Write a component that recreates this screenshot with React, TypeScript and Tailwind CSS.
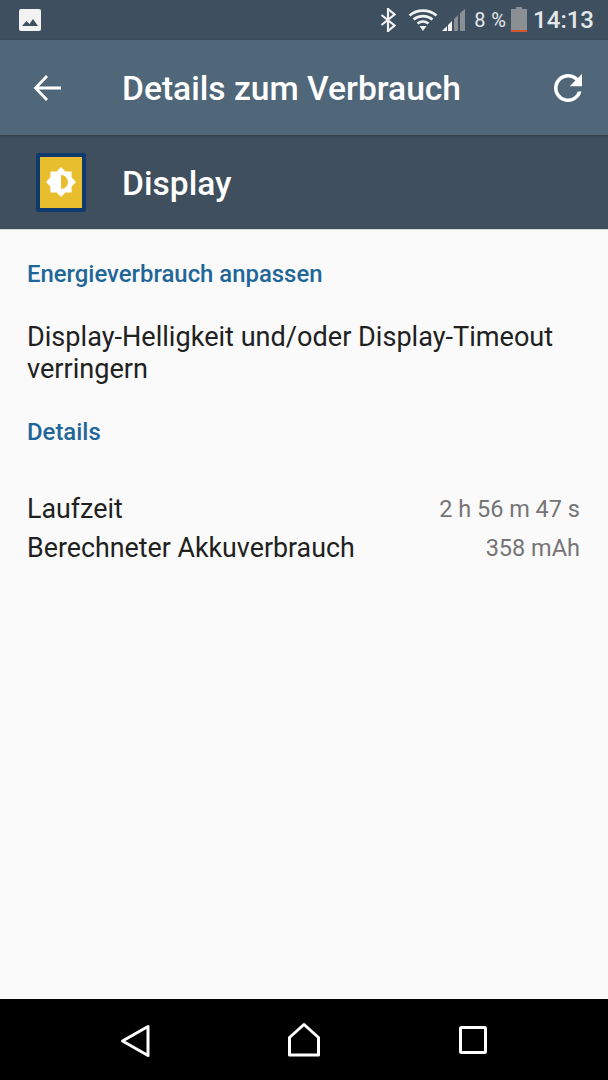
import React from "react";

const Row = ({ label, value }: { label: string; value: string }) => (
  <div className="flex items-center justify-between h-[39px]">
    <span className="text-[26.8px] text-[#212121]">{label}</span>
    <span className="text-[23.500px] text-[#757575]">{value}</span>
  </div>
);

const StatusBar = () => (
  <div className="h-[40px] bg-[#3e505f] flex items-center pl-[19px] pr-[14px] text-[#e4e8ea]">
    <svg width="22" height="22" viewBox="0 0 22 22">
      <rect x="0" y="0" width="22" height="22" rx="2" fill="#f2f2f2" />
      <path d="M3 17l4.500-5 3 3 3.500-5 5 7z" fill="#3e505f" />
    </svg>
    <div className="ml-auto flex items-center">
      <svg width="16" height="24" viewBox="0 0 16 24" fill="none" stroke="#f2f2f2" strokeWidth="2.200">
        <path d="M1.500 7l13 10.500L8 23V1l6.500 5.500L1.500 17" />
      </svg>
      <svg className="ml-[12px]" width="30" height="24" viewBox="0 0 30 24" fill="none" stroke="#f2f2f2" strokeWidth="2.600">
        <path d="M1.500 7.500C9 1 21 1 28.500 7.500" />
        <path d="M5.500 11.500C11 7 19 7 24.500 11.500" />
        <path d="M9.500 15.500C13 13 17 13 20.500 15.500" />
        <path d="M11.500 18h7L15 23z" fill="#f2f2f2" stroke="none" />
      </svg>
      <svg className="ml-[4px]" width="24" height="24" viewBox="0 0 24 24">
        <path d="M0 23l5-5v5z" fill="#f2f2f2" />
        <path d="M6 17l4-4v10H6z" fill="#f2f2f2" />
        <path d="M12 11l4-4v16h-4z" fill="#8a8f93" />
        <path d="M18 5l5-4v22h-5z" fill="#8a8f93" />
      </svg>
      <span className="ml-[8px] text-[20px] tracking-[0.3px]">8 %</span>
      <svg className="ml-[5px]" width="16" height="26" viewBox="0 0 16 26">
        <path d="M5 0h6v2h5v22H0V2h5z" fill="#8a8f93" />
        <rect x="0" y="23" width="16" height="2" fill="#d4562f" />
      </svg>
      <span className="ml-[6px] text-[24px] font-medium">14:13</span>
    </div>
  </div>
);

const App = () => {
  return (
    <div
      className="w-[608px] h-[1080px] flex flex-col bg-[#fafafa]"
      style={{ fontFamily: "Roboto, sans-serif" }}
    >
      <StatusBar />

      <div className="h-[95px] bg-[#506679] flex items-center pl-[33px] pr-[19px] text-white relative z-10 shadow-[0_1px_3px_rgba(0,0,0,0.3)]">
        <svg width="30" height="30" viewBox="0 0 30 30" fill="none" stroke="white" strokeWidth="2.800">
          <path d="M28 15H3M14 3L2.500 15 14 27" />
        </svg>
        <span className="ml-[59px] text-[33.600px] font-medium leading-[40px] pt-[3px]">Details zum Verbrauch</span>
        <svg className="ml-auto" width="42" height="42" viewBox="0 0 24 24" fill="white">
          <path d="M17.650 6.350A7.958 7.958 0 0 0 12 4a8 8 0 1 0 7.730 10h-2.080A6 6 0 1 1 12 6c1.660 0 3.140.690 4.220 1.780L13 11h7V4l-2.350 2.350z" />
        </svg>
      </div>

      <div className="h-[94px] bg-[#3f4f5e] flex items-center pl-[36px] text-white">
        <div className="w-[50px] h-[59px] border-[4px] border-[#0f3a6e] rounded-[2px] bg-[#e8bd2e] flex items-center justify-center">
          <svg width="30" height="30" viewBox="0 0 30 30">
            <path d="M15 0l4.400 4.400h6.200v6.200L30 15l-4.400 4.400v6.200h-6.200L15 30l-4.400-4.400H4.400v-6.200L0 15l4.400-4.400V4.400h6.200z" fill="white" />
            <path d="M15 8a7 7 0 0 1 0 14z" fill="#e8bd2e" />
          </svg>
        </div>
        <span className="ml-[36px] text-[33.600px] font-medium leading-[40px] pt-[3px]">Display</span>
      </div>

      <div className="flex-1 pl-[27px] pr-[28px] pt-[30px] border-t border-[#d5d8da]">
        <div className="text-[23.900px] font-medium text-[#1f6699] leading-[28px]">Energieverbrauch anpassen</div>
        <div className="mt-[33px] text-[27.100px] text-[#212121] leading-[32px]">
          Display-Helligkeit und/oder Display-Timeout verringern
        </div>
        <div className="mt-[33px] text-[23.900px] font-medium text-[#1f6699] leading-[28px]">Details</div>
        <div className="mt-[44px]">
          <Row label="Laufzeit" value="2 h 56 m 47 s" />
          <Row label="Berechneter Akkuverbrauch" value="358 mAh" />
        </div>
      </div>

      <div className="h-[81px] bg-black flex items-center">
        <svg className="ml-[120px]" width="30" height="36" viewBox="0 0 30 36" fill="none" stroke="white" strokeWidth="3" strokeLinejoin="round">
          <path d="M2.500 19L28 4.500v29z" />
        </svg>
        <svg className="ml-[137px]" width="34" height="36" viewBox="0 0 34 36" fill="none" stroke="white" strokeWidth="3" strokeLinejoin="round">
          <path d="M2.500 15.500L17 2.500l14.500 13V33h-29z" />
        </svg>
        <svg className="ml-[138px]" width="28" height="28" viewBox="0 0 28 28" fill="none" stroke="white" strokeWidth="3" strokeLinejoin="round">
          <rect x="1.500" y="1.500" width="25" height="25" rx="1" />
        </svg>
      </div>
    </div>
  );
};

export default App;
